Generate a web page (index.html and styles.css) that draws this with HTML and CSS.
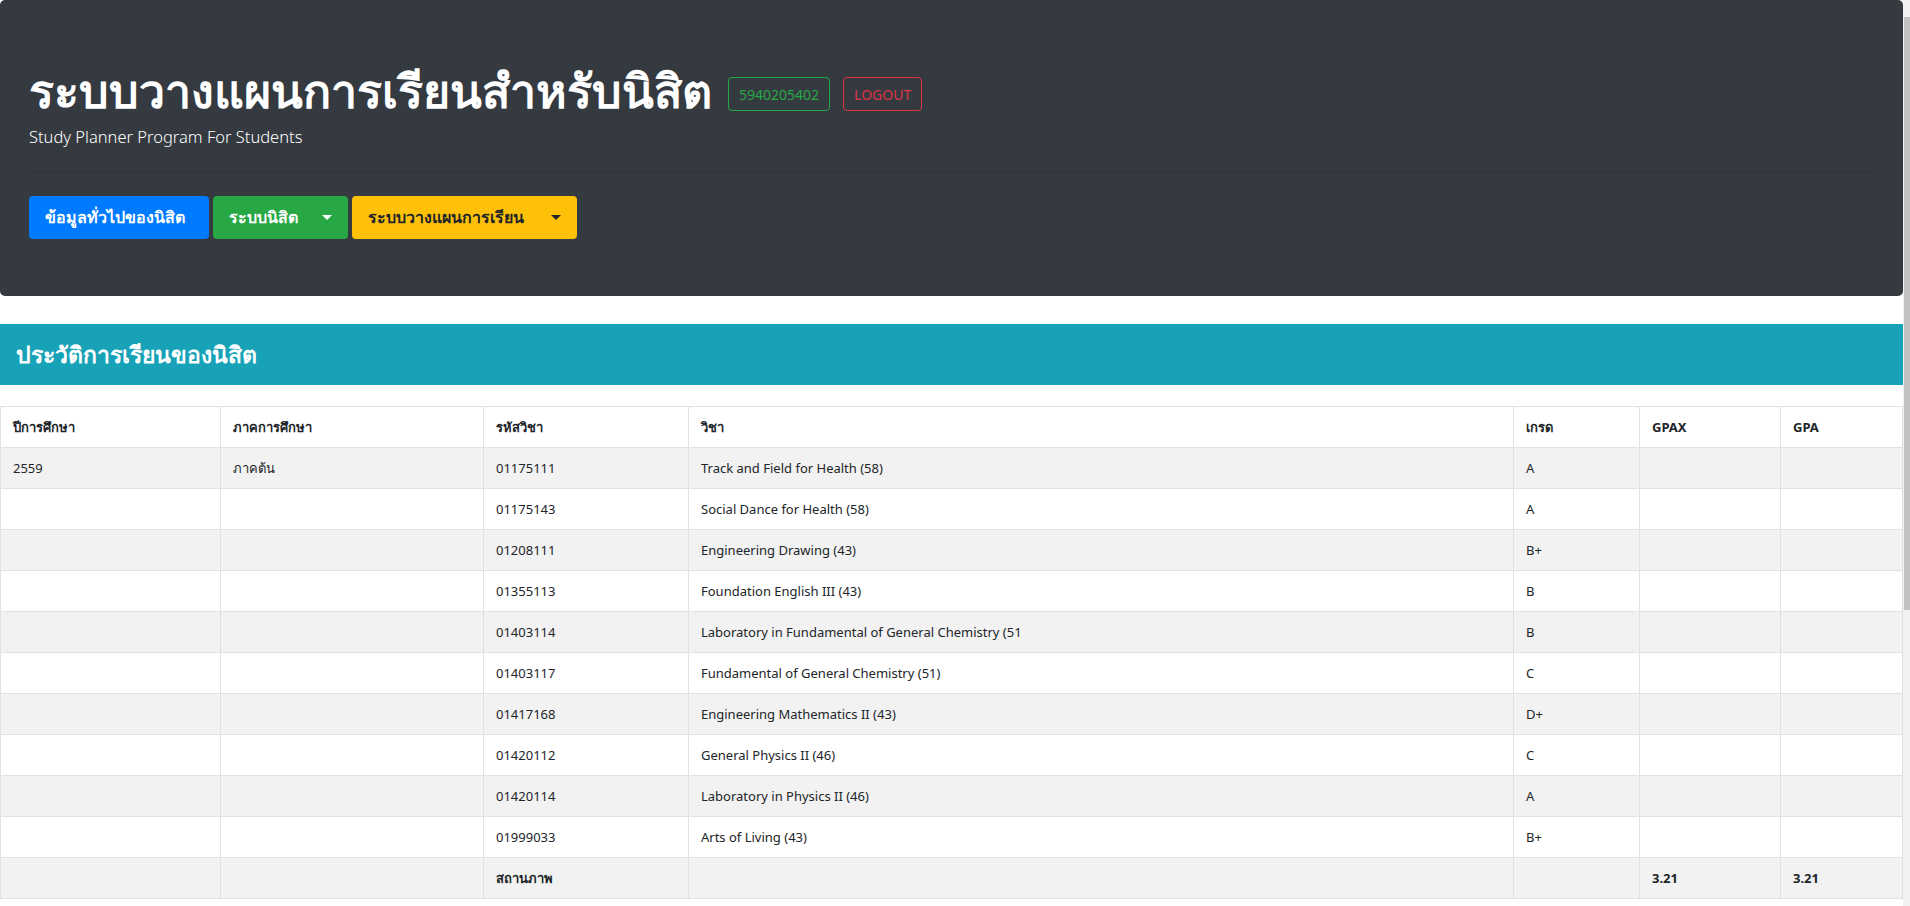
FILE: index.html
```html
<!DOCTYPE html>
<html lang="th">
<head>
<meta charset="utf-8">
<title>Study Planner</title>
<link rel="stylesheet" href="styles.css">
</head>
<body>
<div class="page">
  <header class="jumbotron">
    <div class="title-row">
      <h1 class="title">ระบบวางแผนการเรียนสำหรับนิสิต</h1>
      <span class="outline-btn outline-green">5940205402</span>
      <span class="outline-btn outline-red">LOGOUT</span>
    </div>
    <p class="lead">Study Planner Program For Students</p>
    <hr class="divider">
    <nav class="nav-buttons">
      <span class="btn btn-blue">ข้อมูลทั่วไปของนิสิต</span>
      <span class="btn btn-green">ระบบนิสิต<span class="caret"></span></span>
      <span class="btn btn-yellow">ระบบวางแผนการเรียน<span class="caret"></span></span>
    </nav>
  </header>

  <div class="section-head">
    <h3 class="section-title">ประวัติการเรียนของนิสิต</h3>
  </div>

  <table class="grades">
    <colgroup>
      <col class="w-year"><col class="w-sem"><col class="w-code"><col class="w-name"><col class="w-grade"><col class="w-gpax"><col class="w-gpa">
    </colgroup>
    <thead>
      <tr><th>ปีการศึกษา</th><th>ภาคการศึกษา</th><th>รหัสวิชา</th><th>วิชา</th><th>เกรด</th><th>GPAX</th><th>GPA</th></tr>
    </thead>
    <tbody>
      <tr><td>2559</td><td>ภาคต้น</td><td>01175111</td><td>Track and Field for Health (58)</td><td>A</td><td></td><td></td></tr>
      <tr><td></td><td></td><td>01175143</td><td>Social Dance for Health (58)</td><td>A</td><td></td><td></td></tr>
      <tr><td></td><td></td><td>01208111</td><td>Engineering Drawing (43)</td><td>B+</td><td></td><td></td></tr>
      <tr><td></td><td></td><td>01355113</td><td>Foundation English III (43)</td><td>B</td><td></td><td></td></tr>
      <tr><td></td><td></td><td>01403114</td><td>Laboratory in Fundamental of General Chemistry (51</td><td>B</td><td></td><td></td></tr>
      <tr><td></td><td></td><td>01403117</td><td>Fundamental of General Chemistry (51)</td><td>C</td><td></td><td></td></tr>
      <tr><td></td><td></td><td>01417168</td><td>Engineering Mathematics II (43)</td><td>D+</td><td></td><td></td></tr>
      <tr><td></td><td></td><td>01420112</td><td>General Physics II (46)</td><td>C</td><td></td><td></td></tr>
      <tr><td></td><td></td><td>01420114</td><td>Laboratory in Physics II (46)</td><td>A</td><td></td><td></td></tr>
      <tr><td></td><td></td><td>01999033</td><td>Arts of Living (43)</td><td>B+</td><td></td><td></td></tr>
      <tr class="status"><td></td><td></td><td>สถานภาพ</td><td></td><td></td><td>3.21</td><td>3.21</td></tr>
    </tbody>
  </table>
</div>
<div class="scrollbar"><div class="scroll-arrow"></div><div class="scroll-thumb"></div></div>
</body>
</html>
```

FILE: styles.css
```css
html, body {
  margin: 0;
  padding: 0;
  height: 906px;
  overflow: hidden;
}
body {
  display: flex;
  font-family: "Noto Sans", "Open Sans", sans-serif;
  color: #212529;
  background: #fff;
}
.page {
  flex: 1;
  min-width: 0;
}
.scrollbar {
  width: 7px;
  height: 906px;
  background: #f1f1f1;
  display: flex;
  flex-direction: column;
  align-items: stretch;
}
.scroll-arrow {
  height: 17px;
}
.scroll-thumb {
  height: 593px;
  background: #c1c1c1;
  margin-left: 1px;
}

/* Jumbotron */
.jumbotron {
  background: #343a40;
  border-radius: 5px;
  padding: 60px 28px 0 29px;
  height: 296px;
  box-sizing: border-box;
  color: #fff;
}
.title-row {
  display: flex;
  align-items: flex-start;
  gap: 13px;
}
.title {
  margin: 0 3px 0 0;
  font-size: 46.5px;
  font-weight: 700;
  line-height: 60px;
}
.outline-btn {
  display: inline-flex;
  align-items: center;
  height: 34px;
  margin-top: 17px;
  box-sizing: border-box;
  padding: 0 10px;
  font-size: 14px;
  border: 1px solid;
  border-radius: 4px;
}
.outline-green { color: #28a745; border-color: #28a745; }
.outline-red { color: #dc3545; border-color: #dc3545; }
.lead {
  margin: 4px 0 0;
  font-size: 16.5px;
  font-weight: 300;
  line-height: 26px;
}
.divider {
  margin: 22px 0 0;
  border: 0;
  border-top: 1px solid rgba(0, 0, 0, 0.12);
}
.nav-buttons {
  display: flex;
  gap: 4px;
  margin-top: 23px;
}
.btn {
  display: inline-flex;
  align-items: center;
  height: 43px;
  box-sizing: border-box;
  padding: 0 16px;
  font-size: 16px;
  font-weight: 700;
  border-radius: 4px;
  color: #fff;
}
.btn-blue { background: #007bff; width: 180px; }
.btn-green { background: #28a745; width: 135px; }
.btn-yellow { background: #ffc107; color: #212529; width: 225px; }
.caret {
  margin-left: auto;
  width: 0;
  height: 0;
  border-left: 5px solid transparent;
  border-right: 5px solid transparent;
  border-top: 5px solid currentColor;
}

/* Section header */
.section-head {
  margin-top: 28px;
  background: #17a2b8;
  height: 61px;
  display: flex;
  align-items: center;
  padding: 0 16px;
  color: #fff;
}
.section-title {
  margin: 0;
  font-size: 23px;
  font-weight: 700;
}

/* Table */
.grades {
  margin-top: 21px;
  width: 1902px;
  border-collapse: collapse;
  table-layout: fixed;
  font-size: 13px;
}
.w-year { width: 220px; }
.w-sem { width: 263px; }
.w-code { width: 205px; }
.w-name { width: 825px; }
.w-grade { width: 126px; }
.w-gpax { width: 141px; }
.w-gpa { width: 122px; }
.grades th,
.grades td {
  border: 1px solid #dee2e6;
  height: 40px;
  padding: 0 12px;
  text-align: left;
  vertical-align: middle;
  white-space: nowrap;
  overflow: hidden;
}
.grades th {
  font-weight: 700;
}
.grades tbody tr:nth-child(odd) {
  background: #f2f2f2;
}
.grades .status td {
  font-weight: 700;
}
```
